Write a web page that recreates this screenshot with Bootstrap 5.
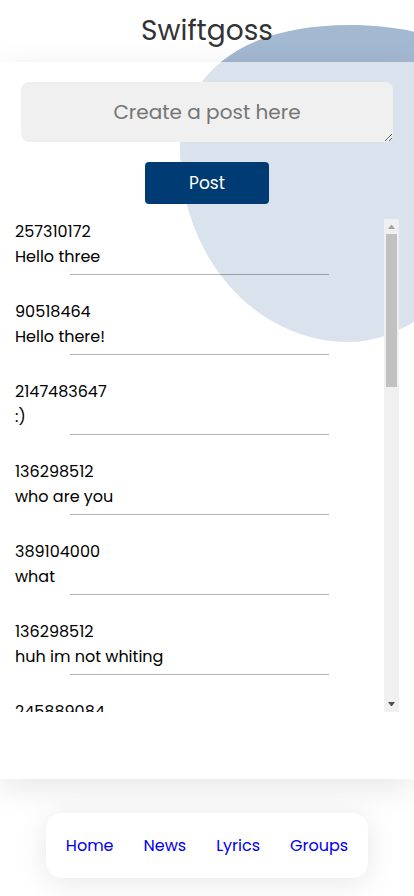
<!DOCTYPE html>
<html lang="en">
<head>
<meta charset="utf-8">
<meta name="viewport" content="width=device-width, initial-scale=1">
<title>Swiftgoss</title>
<link href="https://cdn.jsdelivr.net/npm/bootstrap@5.3.0/dist/css/bootstrap.min.css" rel="stylesheet">
<style>
body { font-family: Poppins, Inter, "Open Sans", sans-serif; font-size: 16px; line-height: 25px; color: #000; background: #fff; }
.page { isolation: isolate; }
.blob { position: absolute; top: 25px; left: 180px; width: 338px; height: 318px; z-index: -1; }
.brand-title { font-size: 28px; line-height: 62px; font-weight: 400; color: #333; }
.panel { background: rgba(255, 255, 255, .6); box-shadow: 0 8px 32px rgba(0, 0, 0, .1); padding: 20px 15px 67px; }
.post-form { gap: 20px; }
.post-box { height: 60px; padding: 12px; margin: 0 6px; width: auto; border: 0; border-radius: 8px; background: #f0f0f0; font-size: 20px; line-height: 36px; text-align: center; resize: vertical; }
.post-box::placeholder { color: #757575; }
.btn-post { width: 124px; height: 42px; border: 0; border-radius: 4px; background: #003c73; color: #fff; font-size: 17px; line-height: 25px; padding: 8px; }
.btn-post:hover { background: #002f5a; color: #fff; }
.feed { height: 55vh; margin-top: 15px; }
.feed-scroll { overflow-y: scroll; scrollbar-width: none; }
.feed-scroll::-webkit-scrollbar { display: none; }
.post-item hr { width: 70%; margin: 5px auto 24px; border-top: 1px solid #000; opacity: .3; }
.bar { width: 15px; background: #f0f0f0; padding-bottom: 2px; }
.bar-thumb { height: 153px; margin: 0 2px; background: #c1c1c1; }
.dock { margin: 34px 0 18px; padding: 20px; gap: 30px; border-radius: 16px; background: #fff; box-shadow: 0 4px 30px rgba(0, 0, 0, .1); }
.dock a { color: #00e; }
</style>
</head>
<body>
<div class="page position-relative overflow-hidden min-vh-100">
<svg class="blob" viewBox="0 0 338 318" aria-hidden="true"><path fill="#a3b8d1" d="M0 126C0 57 52 0 170 0C265 0 338 40 338 100C338 196 262 317 168 317A169 191 0 0 1 0 126Z"/></svg>
<header><h1 class="brand-title text-center m-0">Swiftgoss</h1></header>
<main class="panel">
  <form class="post-form d-flex flex-column">
    <textarea class="form-control post-box align-self-stretch" rows="1" aria-label="Post text" placeholder="Create a post here"></textarea>
    <button type="button" class="btn btn-post align-self-center">Post</button>
  </form>
  <section class="feed d-flex" aria-label="Posts">
    <div class="feed-scroll flex-grow-1" tabindex="0">
      <article class="post-item"><div>257310172</div><div>Hello three</div><hr></article>
      <article class="post-item"><div>90518464</div><div>Hello there!</div><hr></article>
      <article class="post-item"><div>2147483647</div><div>:)</div><hr></article>
      <article class="post-item"><div>136298512</div><div>who are you</div><hr></article>
      <article class="post-item"><div>389104000</div><div>what</div><hr></article>
      <article class="post-item"><div>136298512</div><div>huh im not whiting</div><hr></article>
      <article class="post-item"><div>245889084</div></article>
    </div>
    <div class="bar d-flex flex-column" aria-hidden="true">
      <svg width="15" height="15"><path fill="#a3a3a3" d="M4 10L7 6H8L11 10Z"/></svg>
      <div class="bar-thumb"></div>
      <svg class="mt-auto" width="15" height="8"><path fill="#505050" d="M4 0H11L8 4H7Z"/></svg>
    </div>
  </section>
</main>
<div class="d-flex justify-content-center">
  <nav class="dock d-flex" aria-label="Main">
    <a class="text-decoration-none" href="#home">Home</a>
    <a class="text-decoration-none" href="#news">News</a>
    <a class="text-decoration-none" href="#lyrics">Lyrics</a>
    <a class="text-decoration-none" href="#groups">Groups</a>
  </nav>
</div>
</div>
<script src="https://cdn.jsdelivr.net/npm/bootstrap@5.3.0/dist/js/bootstrap.bundle.min.js"></script>
</body>
</html>
